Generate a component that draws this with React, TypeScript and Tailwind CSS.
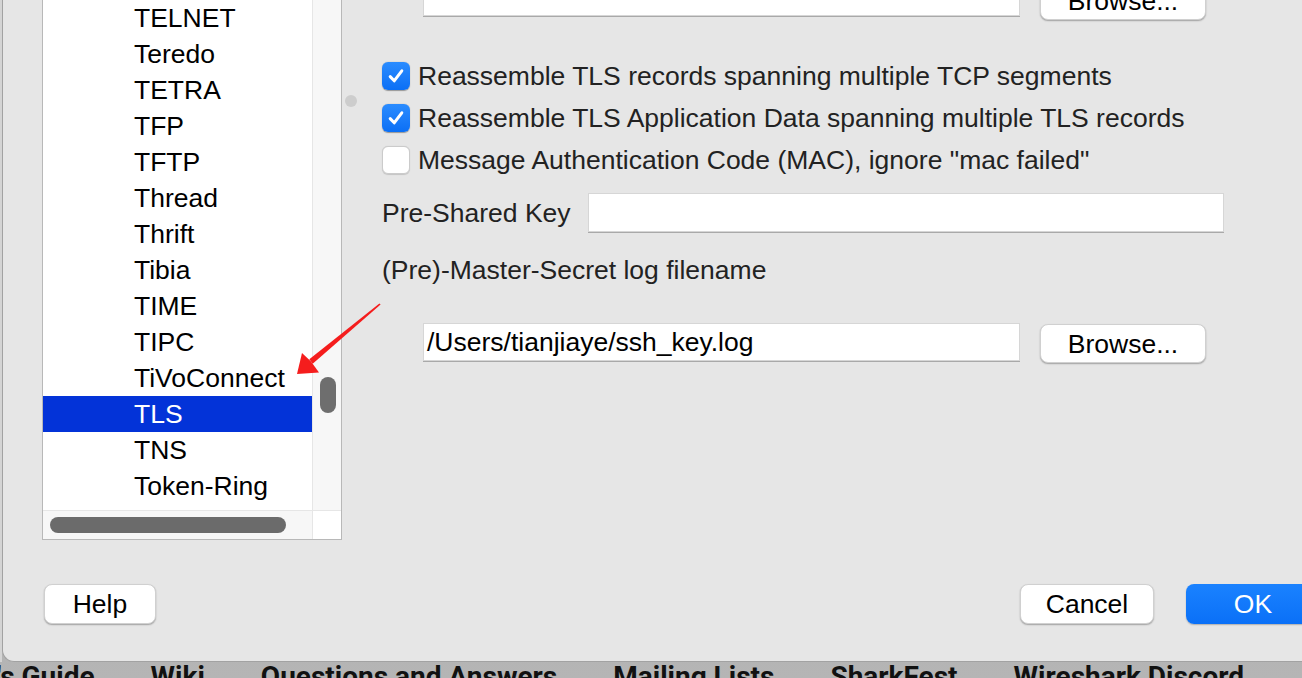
import React from "react";

const items = [
  "TELNET",
  "Teredo",
  "TETRA",
  "TFP",
  "TFTP",
  "Thread",
  "Thrift",
  "Tibia",
  "TIME",
  "TIPC",
  "TiVoConnect",
  "TLS",
  "TNS",
  "Token-Ring",
];

function Check({ checked }: { checked: boolean }) {
  if (checked) {
    return (
      <div className="w-[28px] h-[28px] shrink-0 rounded-[6px] bg-gradient-to-b from-[#2a8cff] to-[#0a6ff5] flex items-center justify-center shadow-[0_0.5px_1px_rgba(0,0,0,0.35)]">
        <svg width="20" height="20" viewBox="0 0 20 20">
          <path
            d="M4.2 10.6 L8.2 14.8 L15.8 4.8"
            stroke="white"
            strokeWidth="3"
            fill="none"
            strokeLinecap="round"
            strokeLinejoin="round"
          />
        </svg>
      </div>
    );
  }
  return (
    <div className="w-[28px] h-[28px] shrink-0 rounded-[6px] bg-white border border-[#cbcbcb] shadow-[0_0.5px_1px_rgba(0,0,0,0.15)]" />
  );
}

function Btn({ label, w }: { label: string; w: string }) {
  return (
    <div
      className={`${w} h-[39px] shrink-0 rounded-[8px] bg-white border-[0.5px] border-[#d0d0d0] shadow-[0_1px_1.5px_rgba(0,0,0,0.3)] flex items-center justify-center text-[26.5px] text-black`}
    >
      <span className="pt-[2px]">{label}</span>
    </div>
  );
}

function Field({ w, h, value }: { w: string; h: string; value?: string }) {
  return (
    <div
      className={`${w} ${h} shrink-0 bg-white border border-[#d6d6d6] shadow-[0_1px_0_#a9a9a9] flex items-center pl-[3px] text-[26.5px] text-black`}
    >
      {value && <span className="pt-[2px]">{value}</span>}
    </div>
  );
}

const links = [
  "User's Guide",
  "Wiki",
  "Questions and Answers",
  "Mailing Lists",
  "SharkFest",
  "Wireshark Discord",
];

export default function App() {
  return (
    <div className="relative w-[1302px] h-[678px] overflow-hidden bg-gradient-to-b from-[#979797] to-[#b5b5b5] [font-family:'Liberation_Sans',Arial,sans-serif]">
      <div className="flex h-[662px]">
        <div className="w-[2px] shrink-0 bg-[#d4d4d4]" />
        <div className="w-[1360px] shrink-0 h-full bg-[#e6e6e6] border-l border-b border-[#a2a2a2] rounded-bl-[12px] flex flex-col">
          {/* top area */}
          <div className="flex items-start h-[540px]">
            {/* list */}
            <div className="ml-[39px] w-[300px] h-[540px] shrink-0 border-x border-b border-[#b8b8b8] bg-white flex flex-col">
              <div className="flex flex-1 min-h-0">
                <div className="flex-1 flex flex-col">
                  {items.map((it) => (
                    <div
                      key={it}
                      className={`h-[36px] shrink-0 pl-[91px] pt-[2px] flex items-center text-[26.5px] ${
                        it === "TLS" ? "bg-[#0333d8] text-white" : "text-black"
                      }`}
                    >
                      {it}
                    </div>
                  ))}
                </div>
                <div className="w-[29px] shrink-0 border-l border-[#e6e6e6] bg-[#f7f7f7] pt-[377px] pl-[7px]">
                  <div className="w-[16px] h-[36px] rounded-full bg-[#6e6e6e]" />
                </div>
              </div>
              <div className="h-[29px] shrink-0 flex border-t border-[#e6e6e6]">
                <div className="flex-1 bg-[#f7f7f7] pl-[7px] pt-[6px]">
                  <div className="w-[236px] h-[16px] rounded-full bg-[#6b6b6b]" />
                </div>
                <div className="w-[29px] shrink-0 border-l border-[#e6e6e6] bg-white" />
              </div>
            </div>

            {/* splitter */}
            <div className="w-[16px] shrink-0 pt-[95px] pl-[3px]">
              <div className="w-[12px] h-[12px] rounded-full bg-[#cdcdcd]" />
            </div>

            {/* right pane */}
            <div className="flex flex-col pl-[24px] -mt-[22px] text-[26.5px] text-[#222]">
              <div className="flex items-start ml-[41px]">
                <Field w="w-[597px]" h="h-[38px]" />
                <div className="ml-[20px] mt-[3px]">
                  <Btn label="Browse..." w="w-[166px]" />
                </div>
              </div>

              <div className="flex flex-col mt-[35px]">
                <div className="h-[42px] flex items-center gap-[8px]">
                  <Check checked />
                  <span className="pt-[2px]">Reassemble TLS records spanning multiple TCP segments</span>
                </div>
                <div className="h-[42px] flex items-center gap-[8px]">
                  <Check checked />
                  <span className="pt-[2px]">Reassemble TLS Application Data spanning multiple TLS records</span>
                </div>
                <div className="h-[42px] flex items-center gap-[8px]">
                  <Check checked={false} />
                  <span className="pt-[2px]">Message Authentication Code (MAC), ignore "mac failed"</span>
                </div>
              </div>

              <div className="mt-[12px] h-[39px] flex items-center">
                <span className="w-[206px] shrink-0 pt-[2px]">Pre-Shared Key</span>
                <Field w="w-[636px]" h="h-[39px]" />
              </div>

              <div className="mt-[23px] h-[30px] pt-[2px] flex items-center">
                (Pre)-Master-Secret log filename
              </div>

              <div className="mt-[38px] flex items-start ml-[41px]">
                <Field w="w-[597px]" h="h-[38px]" value="/Users/tianjiaye/ssh_key.log" />
                <div className="ml-[20px] mt-[1px]">
                  <Btn label="Browse..." w="w-[166px]" />
                </div>
              </div>
            </div>
          </div>

          {/* buttons */}
          <div className="mt-[44px] flex items-center justify-between pl-[41px] pr-[42px]">
            <div className="h-[40px] w-[112px] rounded-[8px] bg-white border-[0.5px] border-[#d0d0d0] shadow-[0_1px_1.5px_rgba(0,0,0,0.3)] flex items-center justify-center text-[26.5px] text-black">
              <span className="pt-[2px]">Help</span>
            </div>
            <div className="flex items-center gap-[32px]">
              <div className="h-[40px] w-[134px] rounded-[8px] bg-white border-[0.5px] border-[#d0d0d0] shadow-[0_1px_1.5px_rgba(0,0,0,0.3)] flex items-center justify-center text-[26.5px] text-black">
                <span className="pt-[2px]">Cancel</span>
              </div>
              <div className="h-[40px] w-[134px] rounded-[8px] bg-gradient-to-b from-[#1a82ff] to-[#0a70f7] shadow-[0_1px_1.5px_rgba(0,0,0,0.25)] flex items-center justify-center text-[26.5px] text-white">
                <span className="pt-[2px]">OK</span>
              </div>
            </div>
          </div>
        </div>
      </div>

      {/* bottom strip of page behind */}
      <div className="h-[16px] flex justify-end pr-[58px] pt-[1px] [font-family:Roboto,sans-serif] font-bold text-[28px] leading-[28px] text-[#111] whitespace-nowrap">
        {links.map((l, i) => (
          <React.Fragment key={l}>
            {i > 0 && (
              <span className="w-[56px] shrink-0 flex justify-center text-[12px] leading-[28px] text-[#444] pt-[9px]">
                →
              </span>
            )}
            <span className="shrink-0">{l}</span>
          </React.Fragment>
        ))}
      </div>

      {/* red annotation arrow */}
      <svg
        className="absolute left-0 top-0 pointer-events-none"
        width="1302"
        height="678"
        viewBox="0 0 1302 678"
      >
        <polygon
          points="380.6,304.6 379.4,303.4 309.3,359.2 312.7,363.8"
          fill="#f51d1d"
        />
        <polygon
          points="297,374 302,353 311,361.5 319,372.5"
          fill="#f51d1d"
        />
      </svg>
    </div>
  );
}
